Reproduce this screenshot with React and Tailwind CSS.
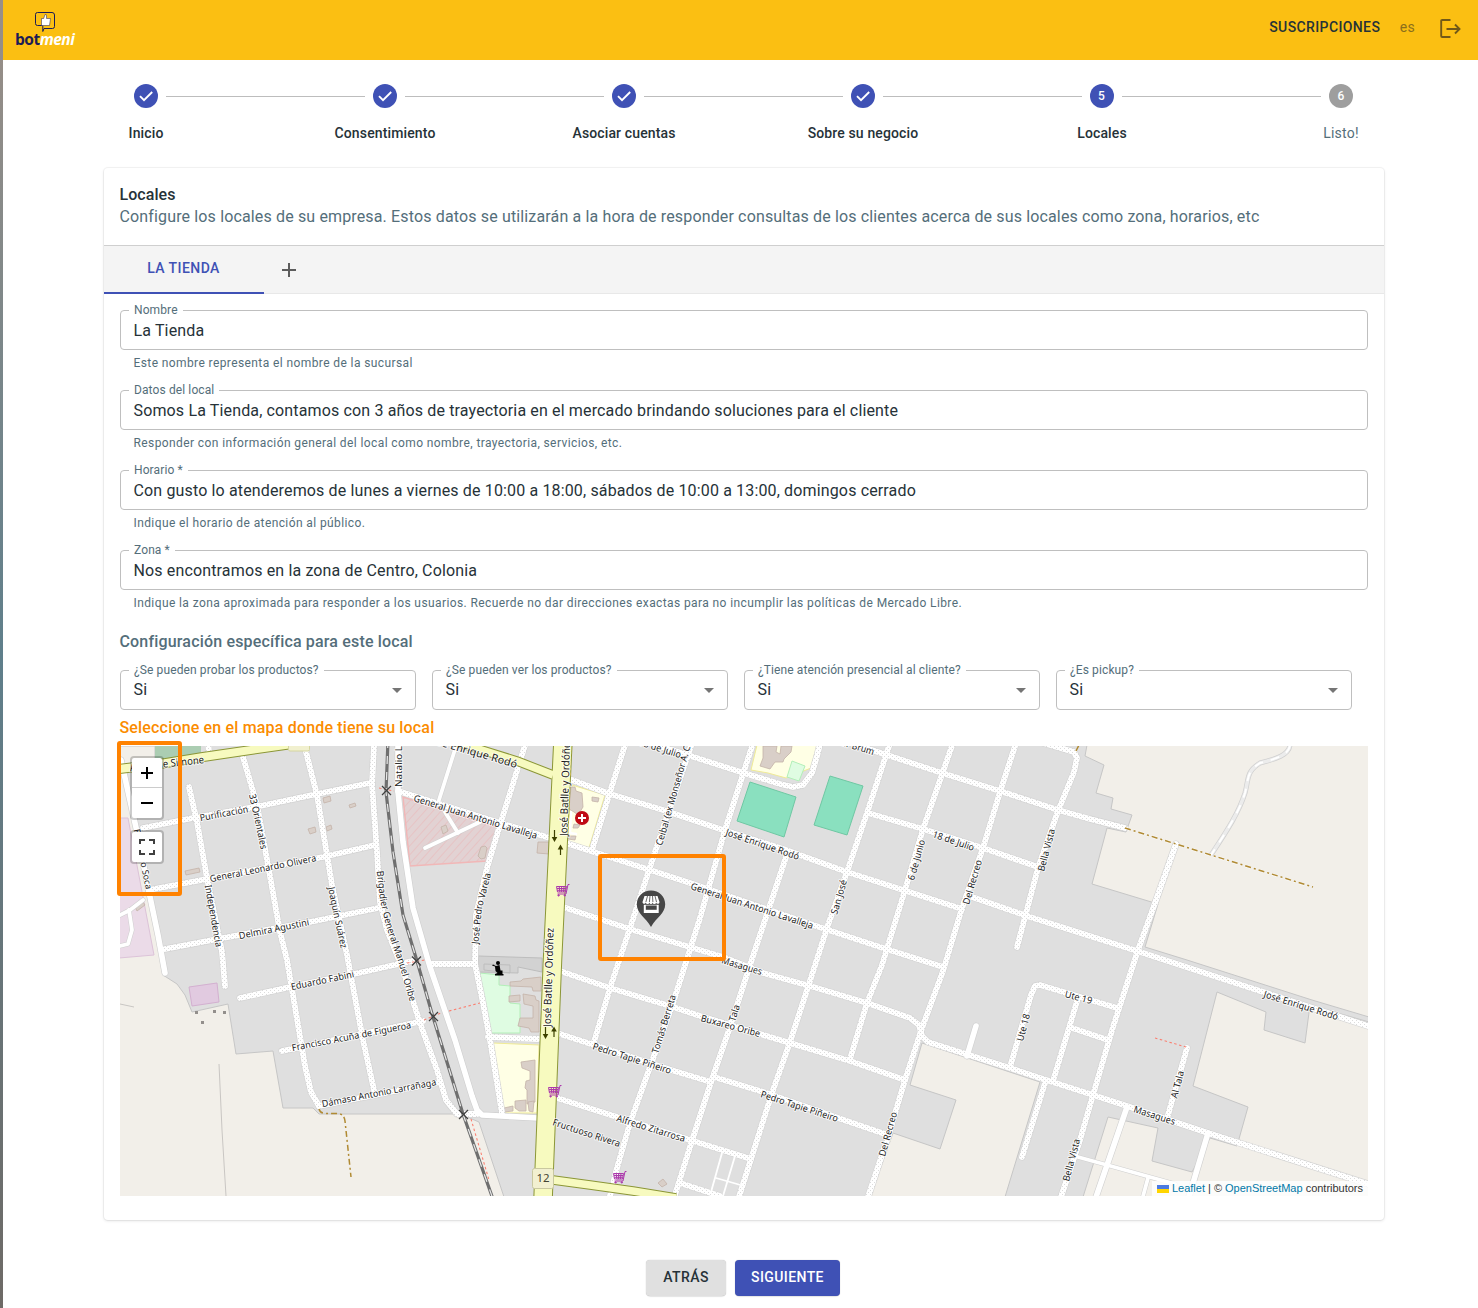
import React from 'react';

const STEPS = ['Inicio', 'Consentimiento', 'Asociar cuentas', 'Sobre su negocio', 'Locales', 'Listo!'];

const FIELDS = [
  { label: 'Nombre', value: 'La Tienda', help: 'Este nombre representa el nombre de la sucursal' },
  {
    label: 'Datos del local',
    value: 'Somos La Tienda, contamos con 3 años de trayectoria en el mercado brindando soluciones para el cliente',
    help: 'Responder con información general del local como nombre, trayectoria, servicios, etc.',
  },
  {
    label: 'Horario *',
    value: 'Con gusto lo atenderemos de lunes a viernes de 10:00 a 18:00, sábados de 10:00 a 13:00, domingos cerrado',
    help: 'Indique el horario de atención al público.',
  },
  {
    label: 'Zona *',
    value: 'Nos encontramos en la zona de Centro, Colonia',
    help: 'Indique la zona aproximada para responder a los usuarios. Recuerde no dar direcciones exactas para no incumplir las políticas de Mercado Libre.',
  },
];

const SELECTS = [
  '¿Se pueden probar los productos?',
  '¿Se pueden ver los productos?',
  '¿Tiene atención presencial al cliente?',
  '¿Es pickup?',
];

/* Residential streets */
const STREETS = [
  '189,787 197,822 207,878 222,952 225,986',
  '243,757 257,805 268,865 280,932 287,960 305,1066 311,1092 319,1106',
  '306,752 317,795 327,855 332,885 347,955 363,1040 374,1090',
  '374,746 372,785 377,852 380,902 387,930 403,970 420,1023 437,1070 446,1100 457,1114 477,1114',
  '143,828 193,818 260,806 317,794 370,783',
  '149,890 207,879 323,857 375,845',
  '165,949 223,938 310,922 383,907',
  '240,998 290,987 354,974 412,961',
  '282,1051 423,1021',
  '319,1106 440,1082',
  '208,740 209,753',
  '398,791 500,823 550,838 650,870 690,883 813,925 883,948 943,967',
  '526,742 500,825 487,868 476,915 475,964 483,1003 490,1040 502,1113',
  '432,964 475,964',
  '488,1037 538,1039',
  '572,780 610,794 663,810 723,830 783,849 847,872 903,890 962,909',
  '626,742 610,792 592,850',
  '693,740 653,858 630,928 610,988 594,1042',
  '754,740 725,830 700,918 673,1003 650,1067 630,1123 617,1168 610,1196',
  '640,740 700,759 747,774 780,784 793,787 803,785 812,773 817,756 821,740',
  '563,907 633,930 723,957 763,973 810,986 867,1003 910,1018 919,1025 922,1036 928,1042 1010,1068 1040,1078 1093,1095 1127,1106 1208,1133 1368,1184',
  '560,971 610,988 670,1006 700,1016 760,1034 850,1061 905,1080',
  '557,1033 594,1045 671,1070 711,1082',
  '714,1077 760,1091 838,1118 885,1134',
  '557,1098 617,1117 690,1140 751,1159',
  '786,857 750,965 730,1027 711,1082 690,1147 674,1198',
  '680,1183 720,1196',
  '891,740 867,813 847,872 828,925 808,987 790,1042 772,1093 738,1200',
  '954,740 923,829 905,890 882,965 867,1003 850,1059',
  '1017,740 1000,792 983,848 962,908 943,971 922,1028 905,1080 887,1140 867,1200',
  '868,813 923,829 983,848 1038,867',
  '847,742 887,755 942,773 1000,791 1058,810 1090,819 1125,828',
  '1040,742 1074,752 1077,758 1074,772 1058,811 1038,868 1025,917 1017,947',
  '972,897 1030,917 1137,951 1260,991 1368,1026',
  '1176,844 1155,903 1138,950 1113,1027 1093,1095 1080,1140 1060,1200',
  '1010,1067 1031,995 1035,986 1040,985 1117,1008',
  '1078,998 1053,1081',
  '1072,1028 1108,1040',
  '1045,1083 1022,1157',
  '1187,1048 1168,1115',
];

/* Plain service roads */
const ROADS = [
  '121,760 137,832 149,892 158,935 165,973',
  '398,740 398,792 403,842 413,908 430,967 455,1040 472,1096 477,1110 482,1115 538,1118',
  '1127,1107 1095,1200',
  '1208,1133 1188,1200',
  '976,1026 967,1056',
];

const SMALL_ROADS = [
  '458,740 439,800',
  '445,812 458,833',
  '425,848 480,822',
  '1078,1157 1107,1165 1175,1184',
  '1148,1178 1142,1200',
  '120,915 130,910 143,900',
  '129,910 132,930 128,944 120,946',
];

const PARK_PATHS = ['722,1153 711,1192', '735,1156 723,1196', '716,1178 744,1186'];

const URBAN_GAPS = [
  '120,746 155,746 155,764 122,772 137,832 149,892 163,975 177,984 185,995 192,1012 228,1004 236,1054 273,1051 283,1108 313,1108 319,1114 460,1114 479,1122 504,1197 119,1197 119,746',
  '922,1043 1040,1082 1005,1197 870,1197 893,1133 940,1149 956,1100 910,1085',
  '1087,745 1085,756 1104,765 1096,793 1113,798 1111,809 1132,815 1126,832 1107,828 1092,884 1158,904 1145,947 1187,960 1312,1000 1369,1017 1369,745',
  '1217,992 1266,1012 1264,1030 1305,1043 1310,1005 1369,1022 1369,1197 1083,1197 1108,1117 1158,1128 1152,1161 1192,1172 1210,1138 1237,1146 1248,1107 1193,1086',
];

const BUILDINGS = [
  '323,798 330,796 331,801 324,803', '349,805 355,803 356,806 350,808', '308,829 315,827 316,832 310,834',
  '326,827 331,825 332,829 327,831', '185,871 199,868 200,872 186,875', '135,907 143,902 145,905 137,911',
  '441,827 446,825 448,831 443,834', '481,847 485,846 487,848 485,858 481,859 478,856',
  '538,842 549,842 549,854 537,853', '571,787 575,787 576,791 582,793 583,807 578,815 574,812 569,809',
  '592,797 599,798 598,802 592,801', '574,824 580,825 578,828 573,828', '568,836 576,836 575,840 568,839',
  '510,982 521,981 523,979 541,977 541,991 533,991 532,987 510,986', '509,996 520,995 520,1001 509,1002',
  '523,994 535,996 536,1000 539,1001 539,1032 531,1032 529,1028 518,1026 520,1018 533,1018 533,1006 524,1004',
  '521,1062 535,1060 535,1102 527,1104 527,1090 525,1088 526,1081 530,1080 530,1071 522,1068',
  '515,1101 526,1100 526,1111 519,1111 515,1108', '504,1108 513,1106 513,1111 504,1112', '528,1102 534,1101 533,1112 529,1111',
  '763,746 777,746 776,752 780,754 781,746 792,746 791,752 784,759 783,762 775,762 770,769 760,766 763,758',
  '658,1183 663,1179 667,1184 662,1187',
];

const LABELS = [
  ['Avda. de Simone', '130,768 204,760', 10.5],
  ['Francisco Soca', '137,829 149,889', 9],
  ['Purificación', '200,818 248,809', 9.5],
  ['33 Orientales', '252,794 258,820 264,849', 9.5],
  ['General Leonardo Olivera', '210,879 316,858', 9.5],
  ['Independencia', '208,885 219,947', 9.5],
  ['Joaquín Suárez', '331,887 344,948', 9.5],
  ['Brigadier General Manuel Oribe', '380,871 383,898 389,925 402,963 413,1001', 9.5],
  ['Delmira Agustini', '239,936 309,922', 9.5],
  ['Eduardo Fabini', '291,987 354,974', 9.5],
  ['Francisco Acuña de Figueroa', '292,1048 411,1025', 9.5],
  ['Dámaso Antonio Larrañaga', '322,1104 436,1082', 9.5],
  ['Natalio López', '398.5,787 398.5,724', 9.5],
  ['General Juan Antonio Lavalleja', '414,798 537,836', 9.5],
  ['José Enrique Rodó', '428,739 517,765', 10.5],
  ['José Batlle y Ordóñez', '564,836 567,738', 10.5],
  ['José Batlle y Ordóñez', '547.5,1027 550.5,928', 10.5],
  ['José Pedro Varela', '475,944 479,907 488,873', 9.5],
  ['Ceibal (ex Monseñor A. C.)', '659,845 689,741', 9.5],
  ['18 de Julio', '639,742 681,755', 9.5],
  ['Baltasar Brum', '818,735 874,752', 9.5],
  ['José Enrique Rodó', '726,832 799,857', 9.5],
  ['General Juan Antonio Lavalleja', '691,886 813,926', 9.5],
  ['Masagues', '722,960 762,972', 9.5],
  ['San José', '834,914 844,880', 9.5],
  ['6 de Junio', '911,880 922,840', 9.5],
  ['18 de Julio', '933,834 974,848', 9.5],
  ['Del Recreo', '966,904 979,860', 9.5],
  ['Bella Vista', '1041,871 1052,829', 9.5],
  ['Buxareo Oribe', '701,1018 760,1034', 9.5],
  ['Pedro Tapie Piñeiro', '593,1046 671,1071', 9.5],
  ['Pedro Tapie Piñeiro', '761,1094 838,1119', 9.5],
  ['Tala', '732,1021 737,1005', 9.5],
  ['Tomás Berreta', '655,1053 673,995', 9.5],
  ['Alfredo Zitarrosa', '617,1118 685,1139', 9.5],
  ['Fructuoso Rivera', '553,1122 620,1144', 9.5],
  ['Del Recreo', '882,1156 894,1112', 9.5],
  ['Ute 18', '1020,1041 1027,1014', 9.5],
  ['Ute 19', '1065,994 1092,1001', 9.5],
  ['José Enrique Rodó', '1264,994 1338,1017', 9.5],
  ['Al Tala', '1174,1098 1181,1071', 9.5],
  ['Masagues', '1134,1109 1175,1122', 9.5],
  ['Bella Vista', '1066,1181 1077,1139', 9.5],
];

const pathLength = (points) => {
  const list = points.split(' ').map((p) => p.split(',').map(Number));
  return list.slice(1).reduce((sum, p, i) => sum + Math.hypot(p[0] - list[i][0], p[1] - list[i][1]), 0);
};

function StreetLabel({ id, text, points, size }) {
  const len = pathLength(points);
  return (
    <>
      <path id={id} d={'M' + points.split(' ').join(' L') + lengthen(points)} fill="none" />
      <text
        fontSize={size}
        dy="3.2"
        fill="#1c1c1c"
        stroke="#ffffff"
        strokeOpacity="0.7"
        strokeWidth="2"
        strokeLinejoin="round"
        paintOrder="stroke"
        fontFamily='"Noto Sans", sans-serif'
      >
        <textPath href={'#' + id} textLength={len} lengthAdjust="spacingAndGlyphs">{text}</textPath>
      </text>
    </>
  );
}

/* Extends the last segment so the final glyph always has room on the path. */
function lengthen(points) {
  const list = points.split(' ').map((p) => p.split(',').map(Number));
  const [a, b] = list.slice(-2);
  const d = Math.hypot(b[0] - a[0], b[1] - a[1]);
  return ` L${b[0] + ((b[0] - a[0]) / d) * 6},${b[1] + ((b[1] - a[1]) / d) * 6}`;
}

function Lines({ items, ...props }) {
  return (
    <g fill="none" strokeLinecap="round" strokeLinejoin="round" {...props}>
      {items.map((p) => <polyline key={p} points={p} />)}
    </g>
  );
}

function Cart({ x, y }) {
  return (
    <g transform={`translate(${x} ${y})`} fill="none" stroke="#ac39ac" strokeWidth="1">
      <path d="M0.5 2.5H10.5L9.5 8H1.5ZM1 4.5H10M1.2 6.3H9.7M3.2 2.5L3.8 8M5.6 2.5V8M8 2.5L7.5 8M13.5 0.5H12L10 10H1.5" />
      <circle cx="2.6" cy="11.4" r="0.7" fill="#ac39ac" />
      <circle cx="8.8" cy="11.4" r="0.7" fill="#ac39ac" />
    </g>
  );
}

function MapCanvas() {
  const yellow = [
    ['119,769 160,764 203,757 292,744', 8.5],
    ['440,737 517,761 553,775', 8],
    ['553,1180 590,1185 633,1191 676,1198', 8],
    ['563,740 558,846 552.5,960 543,1200', 18],
  ];
  return (
    <svg className="block h-[450px] w-full" viewBox="120 746 1248 450">
      <defs>
        <pattern id="dots" width="4" height="4" patternUnits="userSpaceOnUse">
          <rect width="4" height="4" fill="#fff" />
          <rect x="0" y="0" width="1" height="1" fill="#dcdcdc" />
          <rect x="2" y="2" width="1" height="1" fill="#dcdcdc" />
        </pattern>
        <pattern id="hatch" width="6" height="6" patternUnits="userSpaceOnUse" patternTransform="rotate(42)">
          <rect width="6" height="6" fill="#e2d2d3" />
          <rect width="0.8" height="6" fill="#e8bfc0" />
        </pattern>
      </defs>
      <rect x="120" y="746" width="1248" height="450" fill="#dfdfdf" />
      <g fill="#f2efe9" stroke="#c6c6c6" strokeWidth="1">
        {URBAN_GAPS.map((p) => <polygon key={p} points={p} />)}
      </g>
      <polygon points="119,818 128,818 154,955 119,958" fill="#ebdbe8" stroke="#dcc3d8" />
      <polygon points="189,987 217,983 219,1002 192,1006" fill="#e1cae0" stroke="#d3b0d0" />
      <polygon points="155,745 201,745 201,758 155,762" fill="#abcdb2" />
      <polygon points="403,797 497,827 487,861 410,866" fill="url(#hatch)" stroke="#f1b7b7" strokeWidth="1.5" />
      <g stroke="#f0eb95" fill="#ffffe5">
        <polygon points="572,785 605,795 589,848 567,842" />
        <polygon points="493,1043 539,1045 537,1113 504,1113" />
        <polygon points="757,745 818,745 811,768 786,778 768,773 751,770" />
      </g>
      <g fill="#dffce2" stroke="#b2efb8">
        <polygon points="480,973 499,975 499,985 510,986 510,1003 520,1004 520,1033 490,1033" />
        <polygon points="792,761 805,766 799,781 787,777" />
      </g>
      <g fill="#d2d2d2" stroke="#bdbdbd">
        <polygon points="478,956 542,958 542,972 518,967 518,973 478,972" />
        <path d="M484,964 L510,965 L510,973 L484,970 Z" fill="none" />
      </g>
      <g fill="#8ae0bf" stroke="#6fc8a3">
        <polygon points="750,782 796,797 784,837 737,821" />
        <polygon points="830,776 863,786 847,835 814,825" />
      </g>
      <g fill="#d9cfc8" stroke="#c4b3a8" strokeWidth="0.8">
        {BUILDINGS.map((p) => <polygon key={p} points={p} />)}
      </g>
      <g fill="#938f8c">
        <rect x="195" y="1011" width="3" height="3" /><rect x="213" y="1010" width="3" height="3" />
        <rect x="223" y="1011" width="3" height="3" /><rect x="201" y="1021" width="3" height="3" />
      </g>
      <path d="M219 1064L222 1130 226 1196M120 1004L134 1007" fill="none" stroke="#c9c6c3" />

      <Lines items={STREETS} stroke="#d2d2d2" strokeWidth="7" />
      <Lines items={ROADS} stroke="#cfcfcf" strokeWidth="6.8" />
      <Lines items={SMALL_ROADS} stroke="#cfcfcf" strokeWidth="4.8" />
      <Lines items={STREETS} stroke="url(#dots)" strokeWidth="5.8" />
      <Lines items={ROADS} stroke="#ffffff" strokeWidth="5.6" />
      <Lines items={SMALL_ROADS} stroke="#ffffff" strokeWidth="3.8" />
      <Lines items={PARK_PATHS} stroke="#ffffff" strokeWidth="1.8" />
      <Lines items={['571,812 570,833 576,834']} stroke="#ffffff" strokeWidth="2.5" />
      <path d="M1290 745C1289 755 1276 759 1260 763C1246 772 1249 778 1245 793C1238 815 1224 835 1211 855" fill="none" stroke="#cfcfcf" strokeWidth="5" />
      <path d="M1290 745C1289 755 1276 759 1260 763C1246 772 1249 778 1245 793C1238 815 1224 835 1211 855" fill="none" stroke="#ececec" strokeWidth="3.6" />
      <path d="M1290 745C1289 755 1276 759 1260 763C1246 772 1249 778 1245 793C1238 815 1224 835 1211 855" fill="none" stroke="#ffffff" strokeWidth="2" strokeDasharray="9 8" />

      <g fill="none" strokeDasharray="6 3 2 3" stroke="#fff" strokeWidth="3" strokeOpacity="0.5">
        <path d="M1125 828L1312 887" />
      </g>
      <g fill="none" strokeDasharray="6 3 2 3" stroke="#b08a33" strokeWidth="1.5">
        <path d="M1125 828L1313 887M1076 751L1079 745" />
        <path d="M319 1109Q320 1113 325 1113.500H338Q344 1114 345 1121L351 1177" />
      </g>
      <g fill="none" stroke="#fa8072" strokeWidth="1.1" strokeDasharray="2.500 2.500">
        <path d="M449 1011L480 1003M471 1119L489 1180M1155 1038L1186 1047M379 788L394 791M407 963L425 960M424 1020L441 1013" />
      </g>

      <g fill="none" strokeLinejoin="round">
        {yellow.map(([p, w]) => <polyline key={p} points={p} stroke="#8b9636" strokeWidth={w + 1.5} />)}
        {yellow.map(([p, w]) => <polyline key={p + 'f'} points={p} stroke="#f7fabf" strokeWidth={w - 0.5} />)}
      </g>
      <rect x="288.500" y="740" width="21" height="11" rx="1.500" fill="#f1f0cf" stroke="#d5d6a0" />

      <g fill="none">
        <polyline points="388,740 386,792 393,852 403,915 417,961 433,1017 463,1114 494,1202" stroke="#6f6f6f" strokeWidth="3.2" />
        <polyline points="388,740 386,792 393,852 403,915 417,961 433,1017 463,1114 494,1202" stroke="#e9e9e9" strokeWidth="1.2" strokeDasharray="8 8" />
        <path d="M382 786l9 9m0-9l-9 9M412 956.500l9 9m0-9l-9 9M429 1012l9 9m0-9l-9 9M459 1110l9 9m0-9l-9 9" stroke="#3f3f3f" strokeWidth="1.2" />
      </g>

      {LABELS.map(([text, points, size], i) => (
        <StreetLabel key={i} id={'street-' + i} text={text} points={points} size={size} />
      ))}

      <g stroke="#3d4000" fill="#3d4000" strokeWidth="1.2">
        <path d="M554.500 830V839M560.500 855V848M545.500 1027V1036M554 1037V1030" />
        <path stroke="none" d="M551.700 837h5.600l-2.800 5zM557.700 849.500h5.600l-2.800-5zM542.700 1034h5.600l-2.800 5zM551.200 1031.500h5.600l-2.800-5z" />
      </g>
      <rect x="532.500" y="1168.500" width="21" height="20" rx="2" fill="#f2f0d0" stroke="#c9c8a0" />
      <text x="543" y="1182" textAnchor="middle" fontSize="11.500" fill="#444433" fontFamily='"Noto Sans", sans-serif'>12</text>
      <circle cx="582" cy="818" r="7" fill="#bf0a14" />
      <path d="M582 814v8M578 818h8" stroke="#fff" strokeWidth="2" />
      <Cart x={556} y={884} />
      <Cart x={548} y={1085} />
      <Cart x={613} y={1171} />
      <g fill="#000">
        <circle cx="498" cy="963" r="2" />
        <path d="M492 965.500l1-1 3 1.500 3.500-1 1 5.500h2v3.500h1v1.500h-8.500v-1.500l2.500-1-2-2-.5-4.500z" />
      </g>
    </svg>
  );
}

function StorePin() {
  return (
    <svg className="absolute left-[516px] top-[143px] h-[39px] w-[30px]" viewBox="0 0 30 39">
      <path d="M15 1.500C7 1.500 0.800 7.500 0.800 15.200C0.800 24.500 9.500 28 15 38C20.500 28 29.200 24.500 29.200 15.200C29.200 7.500 23 1.500 15 1.500Z" fill="#474747" />
      <path d="M8.500 7h13l2 6c0 2.400-3 2.400-3.300.4c-.5 2-3.200 2-3.600 0c-.5 2-2.700 2-3.200 0c-.5 2-3.200 2-3.600 0c-.5 2-3.300 1.800-3.300-.4z" fill="#fff" />
      <path d="M11.500 7l-1.600 6M14 7l-.6 6M16.500 7l.4 6M19 7l1.500 6" stroke="#474747" strokeWidth="0.8" />
      <path d="M7.800 15.800h14.900v8.200H7.800z" fill="#fff" />
      <path d="M9.800 16.500h10.900v4.300H9.800z" fill="#474747" />
    </svg>
  );
}

function Logo() {
  return (
    <div className="relative h-9 w-[62px]">
      <svg className="absolute left-[19px] top-0 h-[22px] w-[24px]" viewBox="0 0 24 22">
        <path d="M3.500 1.500H18Q20.500 1.500 20.500 4V15.500Q20.500 17.500 18.500 17.500H10L8.800 20.500V14.500H3.500Q1.500 14.500 1.500 12.500V3.500Q1.500 1.500 3.500 1.500Z" fill="none" stroke="#1b1c55" strokeWidth="1" />
        <path d="M7.500 7.500h2.200L11 3.500q1.700-.5 1.500 1.500V7.500h4l-1 7H7.500z" fill="#fff" stroke="#1b1c55" strokeWidth="0.500" />
      </svg>
      <div className="absolute left-0 top-[18px] whitespace-nowrap font-['Open_Sans',sans-serif] text-[15.5px] font-bold leading-5 tracking-[-0.5px] text-[#1b1c55]">
        bot<span className="italic text-white">meni</span>
      </div>
    </div>
  );
}

function Stepper() {
  return (
    <div className="ml-[23px] flex w-[1434px] pt-6">
      {STEPS.map((name, i) => (
        <div key={name} className="relative flex w-[239px] flex-none flex-col items-center">
          {i > 0 && <div className="absolute right-[139.500px] top-3 h-px w-[199px] bg-[#bdbdbd]" />}
          <div className={i === 5 ? 'flex size-6 items-center justify-center rounded-full bg-[#9e9e9e] pl-px text-xs font-medium text-white' : 'flex size-6 items-center justify-center rounded-full bg-[#3f51b5] text-xs font-medium text-white'}>
            {i < 4 ? (
              <svg className="size-6" viewBox="0 0 24 24"><path d="M6 12.200l4 4L18.200 8" fill="none" stroke="#fff" strokeWidth="1.900" /></svg>
            ) : i + 1}
          </div>
          <div className={i === 5 ? 'mt-3.5 pl-px text-sm leading-[22px] tracking-[0.22px] text-[#546e7a]' : 'mt-3.5 pl-px text-sm font-medium leading-[22px] tracking-[0.13px] text-[#263238]'}>{name}</div>
        </div>
      ))}
    </div>
  );
}

function Field({ label, value, help }) {
  return (
    <div className="h-20">
      <div className="relative flex h-10 items-center rounded border border-[#bfbfbf] px-[12.5px]">
        <span className="absolute -top-[9px] left-2 bg-white px-[5px] text-xs leading-[16px] tracking-[0.11px] text-[#546e7a]">{label}</span>
        <span className="pt-0.5 text-base tracking-[0.145px] text-[#263238]">{value}</span>
      </div>
      <p className="ml-[13.500px] mt-[3px] text-xs leading-5 tracking-[0.4px] text-[#546e7a]">{help}</p>
    </div>
  );
}

export default function App() {
  return (
    <div className="flex h-[1308px] w-[1478px] overflow-hidden bg-white font-[Roboto,sans-serif]">
      <div className="w-[3px] flex-none bg-linear-to-b from-[#9a8f87] via-[#5f7f8b] to-[#6e6a66]" />
      <div className="flex-1">
        <header className="flex h-[60px] items-center bg-[#fbbf12] pl-3 pr-4">
          <div className="-mt-[3px]"><Logo /></div>
          <div className="-mt-1.5 ml-auto flex items-center">
            <span className="text-sm font-medium tracking-[0.38px] text-[#263238]">SUSCRIPCIONES</span>
            <span className="ml-[19.5px] text-sm tracking-[0.3px] text-[#8b6f1b]">es</span>
            <svg className="ml-[25px] mr-px mt-px h-5 w-[21px]" viewBox="0 0 21 20">
              <path d="M10.500 2H2.200Q1.200 2 1.200 3V18Q1.200 19 2.200 19H10.500M6.500 11H19.500M15 6.500L19.500 11L15 15.500" fill="none" stroke="#715918" strokeWidth="1.900" />
            </svg>
          </div>
        </header>
        <Stepper />
        <section className="ml-[101px] mt-[24px] h-[1052px] w-[1280px] rounded bg-white shadow-[0_0_0_1px_rgba(63,63,68,0.05),0_1px_3px_0_rgba(63,63,68,0.15)]">
          <div className="h-[77px] px-[15.500px] pt-4 text-base leading-[22px]">
            <h1 className="font-medium tracking-[0.05px] text-[#263238]">Locales</h1>
            <p className="tracking-[0.145px] text-[#546e7a]">Configure los locales de su empresa. Estos datos se utilizarán a la hora de responder consultas de los clientes acerca de sus locales como zona, horarios, etc</p>
          </div>
          <div className="flex h-[49px] border-b border-t border-b-[#e8e8e8] border-t-[#cfcfcf] bg-[#f4f4f4]">
            <div className="-mb-px flex h-12 w-40 items-center justify-center border-b-2 border-[#3f51b5] pb-[3px] pr-px text-sm font-medium tracking-[0.42px] text-[#3f51b5]">LA TIENDA</div>
            <svg className="ml-[18px] mt-[17px] size-[14px]" viewBox="0 0 14 14"><path d="M7 0V14M0 7H14" stroke="#5c5c5c" strokeWidth="2" /></svg>
          </div>
          <div className="px-4 pt-4">
            {FIELDS.map((f) => <Field key={f.label} {...f} />)}
            <h2 className="ml-[-0.5px] pt-px text-base font-medium leading-[22px] tracking-[0.17px] text-[#546e7a]">Configuración específica para este local</h2>
            <div className="mt-[17px] flex gap-4">
              {SELECTS.map((s) => (
                <div key={s} className="relative flex h-10 w-[296px] items-center rounded border border-[#bfbfbf] pl-[12.5px] pr-[13px]">
                  <span className="absolute -top-[9px] left-2 whitespace-nowrap bg-white px-[5px] text-xs leading-[16px] tracking-[0.11px] text-[#546e7a]">{s}</span>
                  <span className="text-base tracking-[0.15px] text-[#263238]">Si</span>
                  <svg className="ml-auto h-[5px] w-[10px]" viewBox="0 0 10 5"><path d="M0 0H10L5 5Z" fill="#757575" /></svg>
                </div>
              ))}
            </div>
            <h3 className="ml-[-0.5px] mt-[7px] text-base font-medium leading-[22px] tracking-[0.17px] text-[#fb8c00]">Seleccione en el mapa donde tiene su local</h3>
            <div className="relative mt-[7px] h-[450px] w-[1248px]">
              <MapCanvas />
              <div className="absolute left-[10px] top-[10px] flex w-[34px] flex-col rounded border-2 border-black/20 bg-white bg-clip-padding">
                <div className="flex h-[30px] items-center justify-center border-b border-[#ccc]">
                  <svg className="size-3" viewBox="0 0 12 12"><path d="M6 0V12M0 6H12" stroke="#000" strokeWidth="2" /></svg>
                </div>
                <div className="flex h-[30px] items-center justify-center">
                  <svg className="size-3" viewBox="0 0 12 12"><path d="M0 6H12" stroke="#000" strokeWidth="2" /></svg>
                </div>
              </div>
              <div className="absolute left-[10px] top-[84px] flex size-[34px] items-center justify-center rounded border-2 border-black/20 bg-white bg-clip-padding">
                <svg className="size-4" viewBox="0 0 16 16"><path d="M1 5V1H6M10 1H15V5M15 11V15H10M6 15H1V11" fill="none" stroke="#404040" strokeWidth="2" /></svg>
              </div>
              <StorePin />
              <div className="absolute -left-[3px] -top-[5px] h-[155px] w-[65px] rounded-[3px] border-4 border-[#ff8200]" />
              <div className="absolute left-[478px] top-[108px] h-[107px] w-[128px] rounded-[3px] border-4 border-[#ff8200]" />
              <div className="absolute bottom-0 right-0 flex h-[15px] items-center bg-white/80 px-[5px] font-['Liberation_Sans',sans-serif] text-[11px] leading-[15px] text-[#333]">
                <svg className="mr-[3px] h-2 w-[12px]" viewBox="0 0 12 8"><path d="M0 0H12V4H0Z" fill="#4c7be1" /><path d="M0 4H12V8H0Z" fill="#ffd500" /></svg>
                <span className="whitespace-pre tracking-[-0.01px]"><span className="text-[#0078a8]">Leaflet</span> | © <span className="text-[#0078a8]">OpenStreetMap</span> contributors</span>
              </div>
            </div>
          </div>
        </section>
        <div className="ml-[643px] mt-10 flex gap-[9px] text-sm font-medium">
          <button className="h-9 w-20 rounded bg-[#e0e0e0] pb-0.5 tracking-[0.4px] text-[#263238] shadow-[0_0_1px_rgba(0,0,0,0.31),0_2px_2px_-2px_rgba(0,0,0,0.25)]">ATRÁS</button>
          <button className="h-9 w-[105px] rounded bg-[#3f51b5] pb-0.5 tracking-[0.4px] text-white shadow-[0_0_1px_rgba(0,0,0,0.31),0_2px_2px_-2px_rgba(0,0,0,0.25)]">SIGUIENTE</button>
        </div>
      </div>
    </div>
  );
}
